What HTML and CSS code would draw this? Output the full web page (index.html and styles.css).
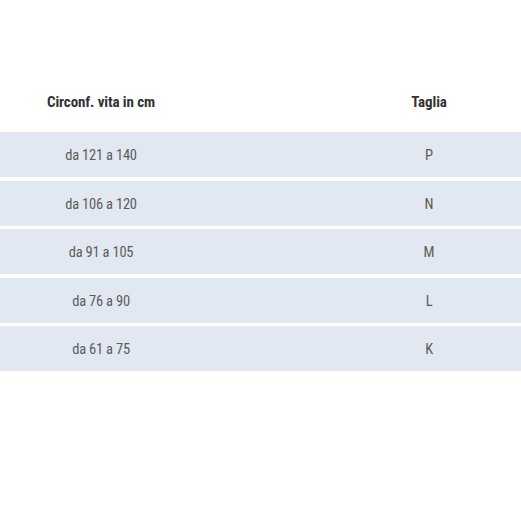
FILE: index.html
```html
<!DOCTYPE html>
<html lang="it">
<head>
<meta charset="utf-8">
<link rel="stylesheet" href="styles.css">
</head>
<body>
<div class="table">
  <div class="row head">
    <div class="cell">Circonf. vita in cm</div>
    <div class="cell">Taglia</div>
  </div>
  <div class="row body">
    <div class="cell">da 121 a 140</div>
    <div class="cell">P</div>
  </div>
  <div class="row body">
    <div class="cell">da 106 a 120</div>
    <div class="cell">N</div>
  </div>
  <div class="row body">
    <div class="cell">da 91 a 105</div>
    <div class="cell">M</div>
  </div>
  <div class="row body">
    <div class="cell">da 76 a 90</div>
    <div class="cell">L</div>
  </div>
  <div class="row body">
    <div class="cell">da 61 a 75</div>
    <div class="cell">K</div>
  </div>
</div>
</body>
</html>
```
FILE: styles.css
```css
html, body {
  margin: 0;
  padding: 0;
  background: #ffffff;
}
body {
  font-family: Roboto, "Liberation Sans", sans-serif;
  font-stretch: condensed;
}
.table {
  display: flex;
  flex-direction: column;
  gap: 3.5px;
  padding-top: 76px;
}
.row {
  display: grid;
  grid-template-columns: 202px 1fr;
  align-items: center;
  height: 45px;
}
.cell {
  text-align: center;
  font-size: 14.5px;
  letter-spacing: -0.2px;
}
.cell + .cell {
  padding-left: 135px;
}
.head {
  height: 52.5px;
}
.head .cell {
  font-weight: 700;
  color: #333333;
  font-size: 15px;
  letter-spacing: -0.1px;
}
.body {
  background: #e1e8f1;
}
.body .cell {
  color: #5c5c5c;
  font-weight: 400;
  padding-top: 2px;
}
```
